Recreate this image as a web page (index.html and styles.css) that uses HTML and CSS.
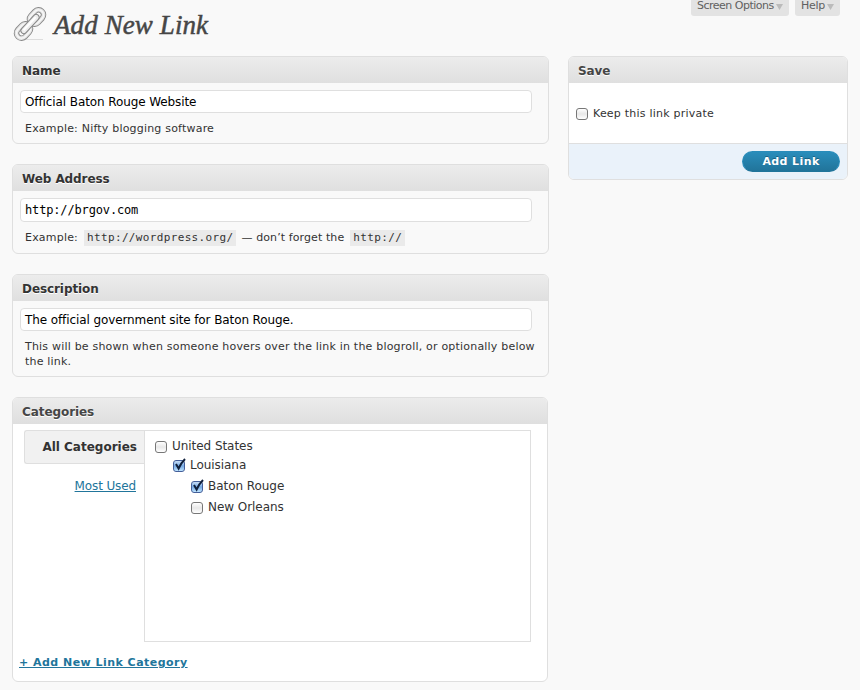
FILE: index.html
```html
<!DOCTYPE html>
<html lang="en">
<head>
<meta charset="utf-8">
<title>Add New Link</title>
<link rel="stylesheet" href="styles.css">
</head>
<body>
<header class="top">
  <svg class="chain" width="34" height="36" viewBox="0 0 34 36" fill="none">
    <path d="M8 33.500H30" stroke="#ddd"/>
    <g transform="rotate(-47 17 18)">
      <rect x="-.5" y="13" width="16" height="10" rx="5" stroke="#888" stroke-width="5.500"/>
      <rect x="-.5" y="13" width="16" height="10" rx="5" stroke="#e6e6e6" stroke-width="3.700"/>
      <rect x="-.5" y="13" width="16" height="10" rx="5" stroke="#f8f8f8" stroke-width="1.200"/>
      <rect x="18.500" y="13" width="16" height="10" rx="5" stroke="#888" stroke-width="5.500"/>
      <rect x="18.500" y="13" width="16" height="10" rx="5" stroke="#e6e6e6" stroke-width="3.700"/>
      <rect x="18.500" y="13" width="16" height="10" rx="5" stroke="#f8f8f8" stroke-width="1.200"/>
      <rect x="5" y="15" width="24" height="6" rx="3" fill="#eee" stroke="#888"/>
      <path d="M8 17.500H26" stroke="#fff" stroke-width="2"/>
    </g>
  </svg>
  <h1>Add New Link</h1>
  <nav class="meta">
    <a class="tab options"><span>Screen Options</span><i></i></a>
    <a class="tab help"><span>Help</span><i></i></a>
  </nav>
</header>
<div class="columns">
  <main>
    <section class="box name">
      <h2>Name</h2>
      <div class="field">Official Baton Rouge Website</div>
      <p>Example: Nifty blogging software</p>
    </section>
    <section class="box address">
      <h2>Web Address</h2>
      <div class="field mono">http://brgov.com</div>
      <p class="example"><span>Example:</span><code>http://wordpress.org/</code><span class="dont">— don’t forget the</span><code>http://</code></p>
    </section>
    <section class="box description">
      <h2>Description</h2>
      <div class="field">The official government site for Baton Rouge.</div>
      <p>This will be shown when someone hovers over the link in the blogroll, or optionally below<br>the link.</p>
    </section>
    <section class="box categories">
      <h2>Categories</h2>
      <div class="picker">
        <div class="tabs"><div class="active">All Categories</div><a>Most Used</a></div>
        <ul class="list">
          <li><b class="check"></b><span>United States</span></li>
          <li class="l1"><b class="check on"><svg width="14" height="14" viewBox="0 0 14 14"><path d="M3 6l2.600 4.500Q8 5 12 1" fill="none" stroke="#10203c" stroke-width="2"/></svg></b><span>Louisiana</span></li>
          <li class="l2"><b class="check on"><svg width="14" height="14" viewBox="0 0 14 14"><path d="M3 6l2.600 4.500Q8 5 12 1" fill="none" stroke="#10203c" stroke-width="2"/></svg></b><span>Baton Rouge</span></li>
          <li class="l2"><b class="check"></b><span>New Orleans</span></li>
        </ul>
      </div>
      <a class="add">+ Add New Link Category</a>
    </section>
  </main>
  <aside class="box save">
    <h2>Save</h2>
    <div class="private"><b class="check"></b><span>Keep this link private</span></div>
    <div class="actions"><button>Add Link</button></div>
  </aside>
</div>
</body>
</html>
```
FILE: styles.css
```css
* { box-sizing: border-box; }
body {
  margin: 0;
  height: 690px;
  overflow: hidden;
  background: #f9f9f9;
  color: #333;
  font: 11px/15px "DejaVu Sans", Verdana, sans-serif;
  white-space: nowrap;
}
h1, h2, p, ul { margin: 0; padding: 0; font-weight: normal; }
.top { display: flex; height: 56px; padding: 0 20px 0 13px; }
.chain { margin-top: 6px; flex: none; }
h1 {
  margin: 9px 0 0 7px;
  font: italic 27px/32px "Liberation Serif", Georgia, serif;
  letter-spacing: .1px;
  color: #464646;
  -webkit-text-stroke: .5px #464646;
}
.meta { display: flex; gap: 6px; margin-left: auto; }
.tab {
  display: flex;
  height: 16px;
  padding: 0 6px;
  background: #e3e3e3;
  border-radius: 0 0 3px 3px;
  color: #606060;
  line-height: 12px;
}
.options { width: 98px; }
.help { width: 45px; }
.options span { letter-spacing: -.5px; }
.help span { letter-spacing: -.3px; }
.tab i {
  width: 7px;
  height: 6px;
  margin: 4px 0 0 auto;
  background: #bbb;
  clip-path: polygon(0 0, 100% 0, 50% 100%);
}
.columns { display: flex; align-items: flex-start; gap: 19px; padding-left: 12px; }
main { width: 537px; }
.box { border: 1px solid #dfdfdf; border-radius: 6px; overflow: hidden; }
.box h2 {
  height: 26px;
  padding-left: 9px;
  background: linear-gradient(#ececec, #dfdfdf);
  font-size: 12px;
  line-height: 28px;
  font-weight: bold;
  letter-spacing: -.08px;
  color: #333;
  text-shadow: 0 1px 0 #fff;
}
.name { height: 88px; margin-bottom: 20px; }
.address { height: 90px; margin-bottom: 20px; }
.description { height: 103px; margin-bottom: 20px; }
.categories { width: 536px; height: 285px; background: #fff; }
.box.save h2, .box.categories h2 { color: #464646; }
.field {
  width: 512px;
  height: 23px;
  margin: 7px 0 0 7px;
  padding-left: 4px;
  background: #fff;
  border: 1px solid #dfdfdf;
  border-radius: 4px;
  color: #000;
  font-size: 12px;
  line-height: 22px;
  letter-spacing: -.1px;
}
.address .field { height: 24px; }
.mono { font-family: "DejaVu Sans Mono", monospace; letter-spacing: -.15px; }
.box p { margin: 8px 0 0 12px; letter-spacing: .2px; }
.box .example { display: flex; line-height: 16px; }
.dont { letter-spacing: .1px; }
.example code {
  height: 16px;
  margin: 0 5px 0 6px;
  padding: 0 3px;
  background: #eaeaea;
  font: 11px/16px "DejaVu Sans Mono", monospace;
  letter-spacing: .35px;
}
.picker { display: flex; margin: 6px 0 0 11px; }
.tabs { width: 120px; text-align: right; font-size: 12px; }
.active {
  height: 34px;
  padding-right: 7px;
  background: #f1f1f1;
  border: 1px solid #dfdfdf;
  border-right: 0;
  border-radius: 3px 0 0 3px;
  font-weight: bold;
  line-height: 32px;
}
.tabs a { display: block; margin: 15px 8px 0 0; color: #21759b; text-decoration: underline; letter-spacing: -.12px; }
.list { width: 387px; height: 212px; padding: 6px 0 0 10px; border: 1px solid #dfdfdf; list-style: none; }
.list li { display: flex; height: 21px; font-size: 12px; line-height: 18px; letter-spacing: -.05px; }
.list li:first-child { height: 19px; }
.l1 { padding-left: 18px; }
.l2 { padding-left: 36px; }
.check {
  flex: none;
  width: 12px;
  height: 12px;
  margin: 4px 5px 0 0;
  background: linear-gradient(#fff, #e8e8e8 50%, #fff);
  border: 1px solid #777;
  border-radius: 3px;
}
.on { background: linear-gradient(#c8def7, #75a9e4 50%, #bfe4ff); border-color: #445f9a; }
.on svg { display: block; margin: -3px 0 0 -1px; overflow: visible; }
.add { display: inline-block; margin: 13px 0 0 6px; color: #21759b; font-weight: bold; text-decoration: underline; letter-spacing: .47px; }
.save { width: 280px; height: 124px; background: #fff; }
.private { display: flex; height: 60px; padding: 21px 0 0 7px; line-height: 19px; letter-spacing: .22px; }
.actions { height: 37px; padding: 7px 7px 0 0; text-align: right; background: #eaf2fa; border-top: 1px solid #dfdfdf; }
button {
  width: 98px;
  height: 21px;
  padding: 0;
  border: 1px solid #298cba;
  border-bottom-color: #21759b;
  border-radius: 11px;
  background: linear-gradient(#2a8dbb, #21749a);
  color: #fff;
  font: bold 11px/19px "DejaVu Sans", Verdana, sans-serif;
  letter-spacing: .4px;
  text-shadow: 0 -1px 0 rgba(0,0,0,.3);
}
```
